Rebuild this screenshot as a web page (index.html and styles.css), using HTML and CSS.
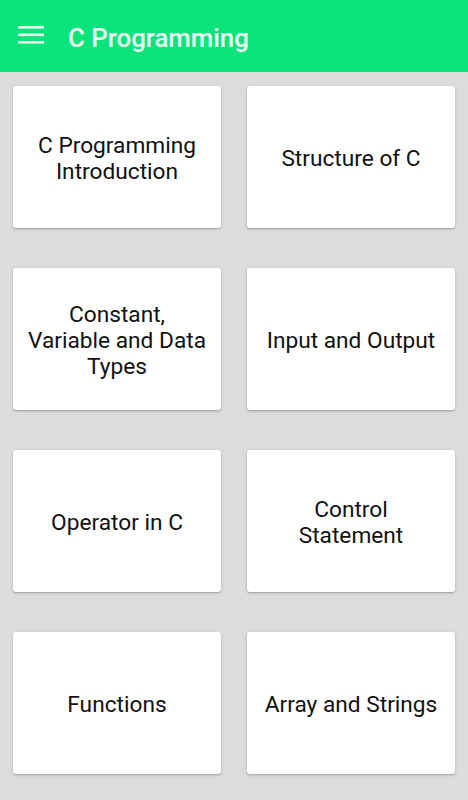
FILE: index.html
```html
<!DOCTYPE html>
<html>
<head>
<meta charset="utf-8">
<link rel="stylesheet" href="styles.css">
</head>
<body>
<header class="appbar">
  <svg class="menu" width="26" height="20" viewBox="0 0 26 20">
    <rect x="0" y="0" width="26" height="2.6" fill="#e8fff0"/>
    <rect x="0" y="7.5" width="26" height="2.6" fill="#e8fff0"/>
    <rect x="0" y="15" width="26" height="2.6" fill="#e8fff0"/>
  </svg>
  <h1 class="title">C Programming</h1>
</header>
<main class="grid">
  <div class="card">C Programming Introduction</div>
  <div class="card">Structure of C</div>
  <div class="card">Constant, Variable and Data Types</div>
  <div class="card">Input and Output</div>
  <div class="card">Operator in C</div>
  <div class="card">Control Statement</div>
  <div class="card">Functions</div>
  <div class="card">Array and Strings</div>
</main>
</body>
</html>
```
FILE: styles.css
```css
* { box-sizing: border-box; }
html, body { margin: 0; padding: 0; }
body {
  background: #dcdcdc;
  font-family: Roboto, "Noto Sans", sans-serif;
  width: 468px;
  height: 800px;
  overflow: hidden;
}
.appbar {
  height: 72px;
  background: #0be37b;
  display: flex;
  align-items: center;
  padding-left: 18px;
}
.menu { display: block; margin-top: -1px; }
.title {
  margin: 3px 0 0 24px;
  font-size: 25.8px;
  font-weight: 500;
  color: #eefff4;
}
.grid {
  display: grid;
  grid-template-columns: 208px 208px;
  grid-auto-rows: 142px;
  column-gap: 26px;
  row-gap: 40px;
  padding: 14px 13px 0 13px;
}
.card {
  background: #fff;
  border-radius: 3px;
  box-shadow: 0 1px 3px rgba(0,0,0,0.22), 0 1px 1px rgba(0,0,0,0.1);
  display: flex;
  align-items: center;
  justify-content: center;
  text-align: center;
  padding: 4px 13px 0 13px;
  font-size: 22.7px;
  line-height: 26px;
  color: #111;
}
```
